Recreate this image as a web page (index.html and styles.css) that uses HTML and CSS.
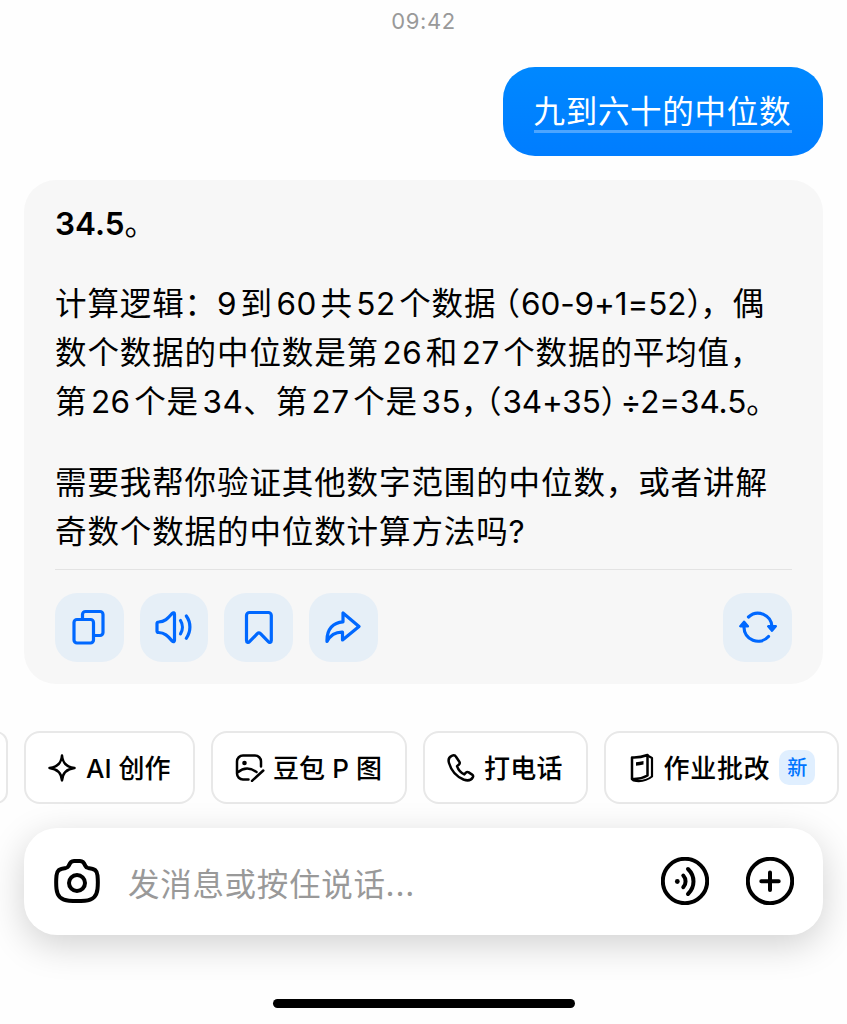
FILE: index.html
```html
<!DOCTYPE html>
<html lang="zh-CN">
<head>
    <meta charset="UTF-8">
    <meta name="viewport" content="width=device-width, initial-scale=1.0">
    <title>豆包</title>
    <link rel="stylesheet" href="styles.css">
</head>
<body>
    <div class="chat">
        <div class="time">09:42</div>

        <div class="message-user"><span class="message-text">九到六十的中位数</span></div>

        <div class="message-bot">
            <p class="answer"><b>34.5</b>。</p>
            <p>
                <span class="line">计算逻辑：<span class="num first">9</span>到<span class="num">60</span>共<span class="num">52</span>个数据<span class="open">（</span><span class="sum">60-9+1=52</span><span class="close">）</span>，偶</span>
                <span class="line">数个数据的中位数是第<span class="num">26</span>和<span class="num">27</span>个数据的平均值，</span>
                <span class="line">第<span class="num">26</span>个是<span class="num last">34</span>、第<span class="num">27</span>个是<span class="num last">35</span><span class="comma-half">，</span><span class="open">（</span><span class="sum">34+35</span><span class="close wide">）</span><span class="sum">÷2=34.5</span>。</span>
            </p>
            <p>
                <span class="line">需要我帮你验证其他数字范围的中位数，或者讲解</span>
                <span class="line">奇数个数据的中位数计算方法吗?</span>
            </p>
            <div class="actions">
                <button class="action-button">
                    <svg width="34" height="36" viewBox="0 0 34 36"><path d="M10.500 10V5.500a3 3 0 0 1 3-3H28a3 3 0 0 1 3 3V23.500a3 3 0 0 1-3 3H23"/><rect x="2" y="10.500" width="19.500" height="23.500" rx="3"/></svg>
                </button>
                <button class="action-button">
                    <svg width="40" height="36" viewBox="0 0 40 36"><path d="M3 14.500a1.500 1.500 0 0 1 1.500-1.500C11.500 12.700 14.500 8.500 18.300 4.300c1-1 2.200-.5 2.200.9v26.100c0 1.400-1.200 1.900-2.200.9C14.500 28 11.500 23.700 4.500 23.500A1.500 1.500 0 0 1 3 22zM26.500 11.500c2.500 4 2.500 9.500 0 13.300M32.300 7c4.800 6.500 4.800 15.500 0 22.300"/></svg>
                </button>
                <button class="action-button">
                    <svg width="32" height="36" viewBox="0 0 32 36"><path d="M3.500 6.500a3 3 0 0 1 3-3h18.800a3 3 0 0 1 3 3v25c0 1.800-1.700 2.500-3 1.200l-7.800-8c-1-1-2.200-1-3.200 0l-7.800 8c-1.300 1.300-3 .6-3-1.200z"/></svg>
                </button>
                <button class="action-button">
                    <svg width="36" height="36" viewBox="0 0 36 36"><path d="M18 4v8.800C8.500 13.300 1.500 20 2 32.500 5.500 26 10.500 23 17.500 23.200v7.800L34 17.500z"/></svg>
                </button>
                <button class="action-button refresh">
                    <svg width="38" height="34" viewBox="0 0 38 34"><path d="M9.500 7A14 14 0 0 1 33 17M29.500 26.500A14 14 0 0 1 5 17"/><path class="solid" d="M29.200 16.300h7.600L33 20.800zM1.300 16.200h7.600L5.100 11.700z"/></svg>
                </button>
            </div>
        </div>

        <div class="chips">
            <div class="chip chip-cut"></div>
            <div class="chip chip-create">
                <svg width="28" height="28" viewBox="0 0 28 28"><path d="M14 1.500C14.500 8.500 18 13 26.500 14 18 15 14.500 19.500 14 26.500 13.500 19.500 10 15 1.500 14 10 13 13.500 8.500 14 1.500z"/></svg>
                <span class="label">AI 创作</span>
            </div>
            <div class="chip chip-photo">
                <svg width="30" height="28" viewBox="0 0 30 28"><path d="M13.500 25.500H8a6 6 0 0 1-6-6V7.500a6 6 0 0 1 6-6h12a6 6 0 0 1 6 6v5M2.500 18.500c6-5 12-5.500 19-.5M17 26.800 28.300 16.500"/><circle class="dot" cx="9.500" cy="9" r="2.300"/></svg>
                <span class="label">豆包 P 图</span>
            </div>
            <div class="chip chip-call">
                <svg width="28" height="28" viewBox="0 0 28 28"><path d="M4.700 1.800C2 3 1 5.500 2 9c2.200 7.500 7.500 13.500 14.500 16.500 4 1.500 7.500 1 9.300-2.200.6-1 .3-2-.7-2.700l-3.400-2.200c-1-.6-2-.5-2.800.3l-1.600 1.700c-3.600-1.500-6-4.500-7.300-8.200l2-1.700c.8-.7 1-1.500.5-2.500L9 2.800C8.200 1.200 6.500 1 4.700 1.800z"/></svg>
                <span class="label">打电话</span>
            </div>
            <div class="chip chip-homework">
                <svg width="24" height="30" viewBox="0 0 24 30"><path d="M2 4.500c5 .3 10-.4 15.500-2.500v20.500c-4.500 2.500-9.500 4-15.500 3.500z"/><path class="thin" d="M17.500 2.500 22 5v18.500C17.500 27 11 29 3.500 27.500L2 26"/><path class="dot" d="M6 9.200c2.500-.1 5-.5 7.500-1.200v3.500c-2.500.7-5 1.100-7.500 1.200z"/></svg>
                <span class="label">作业批改</span>
                <span class="badge">新</span>
            </div>
        </div>

        <div class="input-bar">
            <svg class="camera" width="46" height="44" viewBox="0 0 46 44"><path d="M14.500 7.200C16.500 3 17.500 2 20 2h6c2.500 0 3.500 1 5.500 5.200.5 1 1.300 1.500 2.500 1.700 7 .7 9 2.600 9.500 7.600.5 5 .5 8.500 0 13.500-.8 7.500-4.500 11-12.500 11.700-5.500.4-10.500.4-16 0C7 41 3.300 37.500 2.500 30c-.5-5-.5-8.500 0-13.500.5-5 2.500-6.900 9.500-7.600 1.200-.2 2-.7 2.500-1.700z"/><circle cx="23" cy="24" r="8"/></svg>
            <span class="placeholder">发消息或按住说话...</span>
            <svg width="48" height="48" viewBox="0 0 48 48"><circle cx="24" cy="24" r="22.200"/><circle class="dot" cx="16.300" cy="24.500" r="2.400"/><path d="M22.300 18.500c3 3.300 3 8.500 0 11.700M27 12c7.300 7 7.300 18 0 25"/></svg>
            <svg width="48" height="48" viewBox="0 0 48 48"><circle cx="24" cy="24" r="22.200"/><path d="M24 15.500v17.400M15.300 24.200h17.400"/></svg>
        </div>

        <div class="home-bar"></div>
    </div>
</body>
</html>
```
FILE: styles.css
```css
* {
    box-sizing: border-box;
}

body {
    margin: 0;
    background-color: #fefefe;
    color: #000;
    font-family: Inter, "Noto Sans CJK SC", sans-serif;
}

.chat {
    display: flex;
    flex-direction: column;
    width: 847px;
    height: 1024px;
    padding: 0 24px;
    overflow: hidden;
}

.time {
    height: 67px;
    padding-top: 7px;
    font-size: 22px;
    line-height: 28px;
    letter-spacing: 0.6px;
    text-align: center;
    color: #999;
}

.message-user {
    align-self: flex-end;
    width: 320.5px;
    height: 89px;
    padding: 18px 31px 0;
    border-radius: 32px;
    background: linear-gradient(#0088ff, #007dff);
    color: #fff;
}

.message-text {
    display: block;
    height: 48px;
    border-bottom: 3px solid #4da5ff;
    font-size: 31.5px;
    line-height: 54px;
    letter-spacing: 0.7px;
    white-space: nowrap;
}

.message-bot {
    height: 504px;
    margin-top: 24px;
    padding: 19px 31px 0;
    border-radius: 32px;
    background-color: #f7f7f7;
    font-size: 31.5px;
    line-height: 49px;
    letter-spacing: 0.9px;
}

.message-bot p {
    margin: 0 0 31px;
}

.message-bot b {
    font-weight: 600;
    letter-spacing: 0;
}

.line {
    display: block;
    height: 49px;
    white-space: nowrap;
}

.num {
    margin: 0 3.5px;
    letter-spacing: 0.5px;
}

.num.first {
    margin-left: 0;
}

.num.last {
    margin-right: 0;
}

.sum {
    letter-spacing: -0.1px;
}

.open,
.close,
.comma-half {
    font-feature-settings: "halt";
}

.open {
    margin-left: 8px;
}

.close {
    letter-spacing: -2px;
}

.close.wide {
    margin-right: 4px;
    letter-spacing: 0;
}

.actions {
    display: flex;
    gap: 16px;
    margin-top: -18px;
    padding-top: 23px;
    border-top: 1px solid #e3e3e3;
}

.message-bot p:nth-of-type(3) {
    padding-top: 1px;
}

.action-button {
    display: flex;
    align-items: center;
    justify-content: center;
    width: 68.7px;
    height: 69px;
    padding: 0 0 1px;
    border: none;
    border-radius: 22px;
    background-color: #e6eff7;
    cursor: pointer;
}

.action-button svg {
    fill: none;
    stroke: #0068ff;
    stroke-width: 3.2;
    stroke-linecap: round;
    stroke-linejoin: round;
}

.action-button .solid {
    fill: #0068ff;
    stroke-width: 2.4;
}

.refresh {
    margin-left: auto;
}

.chips {
    display: flex;
    gap: 16px;
    height: 73px;
    margin: 47px -24px 0 -40px;
}

.chip {
    display: flex;
    flex-shrink: 0;
    align-items: center;
    height: 73px;
    border: 2px solid #e8e8e8;
    border-radius: 16px;
    background-color: #fff;
    font-size: 26px;
    font-weight: 500;
    line-height: 38px;
    white-space: nowrap;
}

.chip svg {
    flex-shrink: 0;
    fill: none;
    stroke: #000;
    stroke-width: 2.5;
    stroke-linecap: round;
    stroke-linejoin: round;
}

.chip .thin {
    stroke-width: 2.2;
}

.chip .dot {
    fill: #000;
    stroke: none;
}

.label {
    padding-top: 2px;
}

.chip-cut {
    width: 24px;
}

.chip-create {
    width: 171px;
    padding-left: 22px;
    gap: 10px;
}

.chip-photo {
    width: 196px;
    padding-left: 22px;
    gap: 8px;
    letter-spacing: 0.1px;
}

.chip-call {
    width: 164.5px;
    padding-left: 22px;
    gap: 9px;
    letter-spacing: 0.3px;
}

.chip-homework {
    width: 235px;
    padding-left: 24px;
    gap: 9px;
    letter-spacing: 0.7px;
}

.chip-homework svg {
    margin-right: 1px;
}

.badge {
    width: 36px;
    height: 35px;
    border-radius: 10px;
    background-color: #e0efff;
    color: #0075ff;
    font-size: 20px;
    line-height: 36px;
    letter-spacing: 0;
    text-align: center;
}

.input-bar {
    display: flex;
    flex-shrink: 0;
    align-items: center;
    height: 107.5px;
    margin-top: 23.5px;
    padding: 0 29.5px 1px 30px;
    border-radius: 33px;
    background-color: #fff;
    box-shadow: 0 10px 36px rgba(0, 0, 0, 0.18);
}

.input-bar svg {
    fill: none;
    stroke: #000;
    stroke-width: 4;
    stroke-linecap: round;
    stroke-linejoin: round;
}

.input-bar .dot {
    fill: #000;
    stroke: none;
}

.input-bar svg + svg {
    margin-left: 36.5px;
}

.placeholder {
    flex: 1;
    margin-left: 28px;
    padding-top: 3px;
    font-size: 31.5px;
    letter-spacing: 0.7px;
    color: #999;
}

.home-bar {
    width: 302px;
    height: 9px;
    margin: 64px auto 0;
    border-radius: 5px;
    background-color: #000;
}
```
